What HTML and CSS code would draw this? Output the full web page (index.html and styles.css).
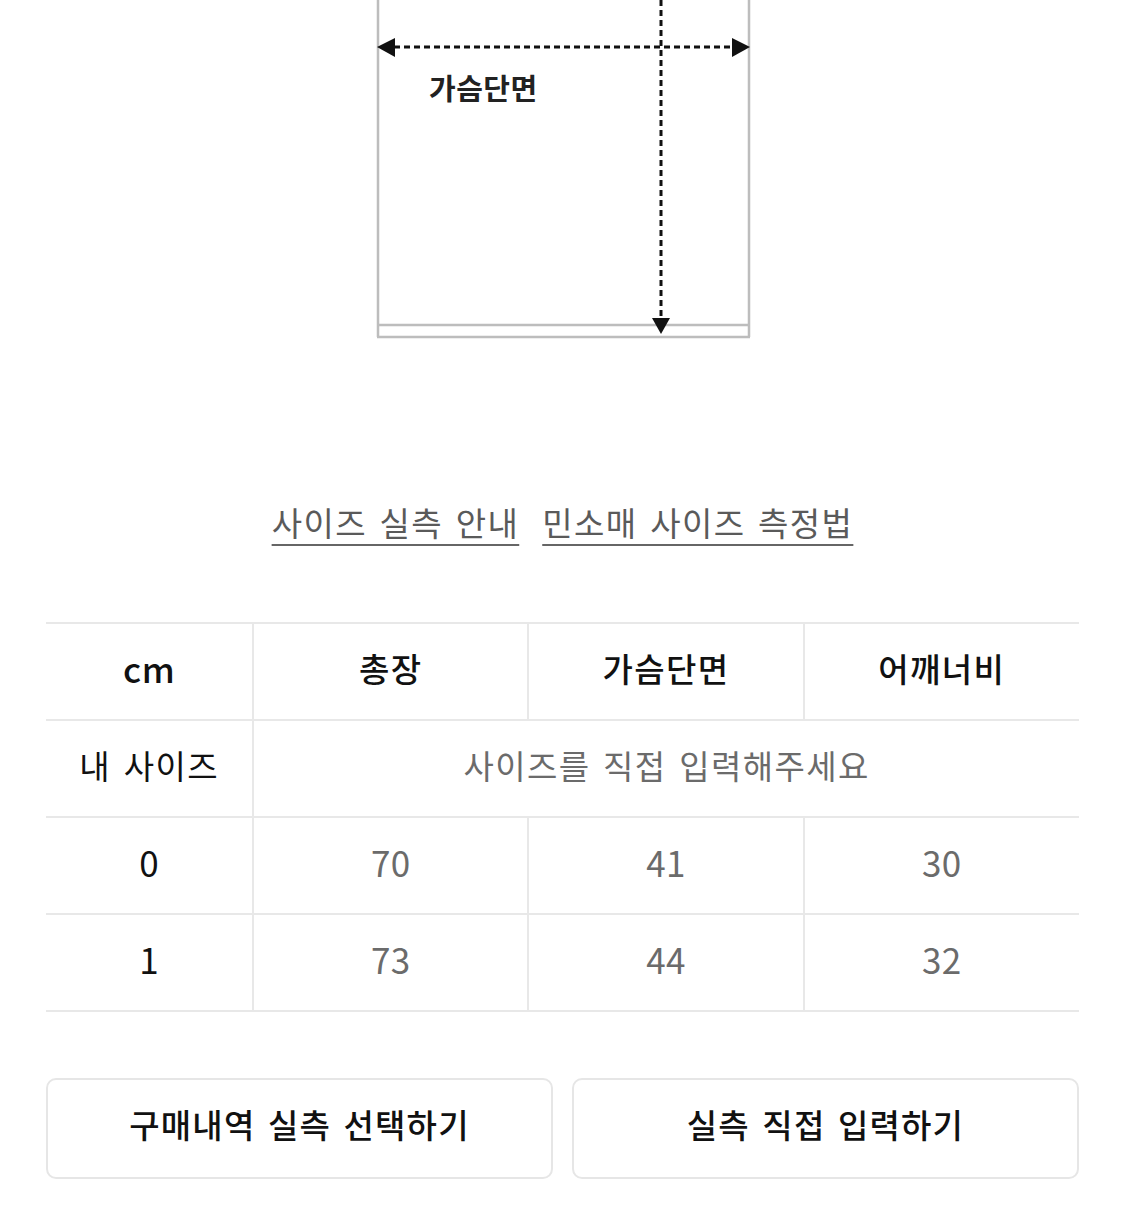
FILE: index.html
```html
<!DOCTYPE html>
<html lang="ko">
<head>
<meta charset="utf-8">
<title>사이즈 정보</title>
<link rel="stylesheet" href="styles.css">
</head>
<body>
<div class="page">
  <div class="diagram">
    <svg class="diagram-svg" width="1125" height="340" viewBox="0 0 1125 340">
      <g fill="none" stroke="#bdbdbd" stroke-width="2.5">
        <line x1="378" y1="0" x2="378" y2="337"/>
        <line x1="749" y1="0" x2="749" y2="337"/>
        <line x1="378" y1="325" x2="749" y2="325"/>
        <line x1="377" y1="337" x2="750" y2="337"/>
      </g>
      <line x1="394" y1="47" x2="734" y2="47" stroke="#111" stroke-width="3" stroke-dasharray="6 4"/>
      <polygon points="377,47 395,38 395,57" fill="#111"/>
      <polygon points="750,47 732,38 732,57" fill="#111"/>
      <line x1="661" y1="0" x2="661" y2="319" stroke="#111" stroke-width="3" stroke-dasharray="6 4"/>
      <polygon points="652,318 670,318 661,334" fill="#111"/>
      <text class="diagram-label" x="429" y="100">가슴단면</text>
    </svg>
  </div>

  <div class="links">
    <a class="guide-link" href="#">사이즈 실측 안내</a>
    <a class="guide-link" href="#">민소매 사이즈 측정법</a>
  </div>

  <table class="size-table">
    <colgroup>
      <col class="c-first">
      <col class="c-data">
      <col class="c-data">
      <col class="c-data">
    </colgroup>
    <tr class="head">
      <td class="label num">cm</td>
      <td>총장</td>
      <td>가슴단면</td>
      <td>어깨너비</td>
    </tr>
    <tr>
      <td class="label">내 사이즈</td>
      <td class="value" colspan="3">사이즈를 직접 입력해주세요</td>
    </tr>
    <tr>
      <td class="label num">0</td>
      <td class="value num">70</td>
      <td class="value num">41</td>
      <td class="value num">30</td>
    </tr>
    <tr>
      <td class="label num">1</td>
      <td class="value num">73</td>
      <td class="value num">44</td>
      <td class="value num">32</td>
    </tr>
  </table>

  <div class="actions">
    <button class="action-btn" type="button">구매내역 실측 선택하기</button>
    <button class="action-btn" type="button">실측 직접 입력하기</button>
  </div>
</div>
</body>
</html>
```

FILE: styles.css
```css
* {
  box-sizing: border-box;
}

html, body {
  margin: 0;
  padding: 0;
  background: #ffffff;
}

body {
  font-family: "Noto Sans CJK KR", "Noto Sans", sans-serif;
  color: #111;
  width: 1125px;
  height: 1211px;
  overflow: hidden;
}

.page {
  display: flex;
  flex-direction: column;
}

.diagram {
  height: 340px;
}

.diagram-svg {
  display: block;
}

.diagram-label {
  font-family: "Noto Sans CJK KR", sans-serif;
  font-weight: 700;
  font-size: 29px;
  fill: #222;
  letter-spacing: 0.5px;
}

.links {
  margin-top: 160px;
  height: 44px;
  display: flex;
  justify-content: center;
  gap: 23px;
  line-height: 44px;
}

.guide-link {
  font-size: 33px;
  letter-spacing: 1.4px;
  color: #5a5a5a;
  text-decoration: underline;
  text-decoration-color: #666;
  text-decoration-thickness: 2px;
  text-underline-offset: 8px;
  word-spacing: 2px;
}

.size-table {
  margin: 78px 0 0 46px;
  width: 1033px;
  border-collapse: collapse;
  table-layout: fixed;
}

.c-first {
  width: 207px;
}

.c-data {
  width: 275px;
}

.size-table td {
  height: 97px;
  padding: 0 0 8px 0;
  text-align: center;
  vertical-align: middle;
  font-size: 33px;
  letter-spacing: 1.4px;
  word-spacing: 2px;
  border-top: 2px solid #e8e8e8;
  border-bottom: 2px solid #e8e8e8;
  border-left: 2px solid #e8e8e8;
}

.size-table td.num {
  font-size: 35px;
  letter-spacing: 0.5px;
}

.size-table td:first-child {
  border-left: none;
}

.size-table .head td {
  font-weight: 500;
  color: #111;
}

.size-table .label {
  color: #111;
}

.size-table .value {
  color: #6b6b6b;
}

.actions {
  margin: 66px 46px 0 46px;
  display: flex;
  gap: 19px;
}

.action-btn {
  flex: 1;
  height: 101px;
  background: #fff;
  border: 2px solid #e6e6e6;
  border-radius: 10px;
  font-family: "Noto Sans CJK KR", sans-serif;
  font-size: 33px;
  font-weight: 500;
  letter-spacing: 1.2px;
  word-spacing: 2px;
  color: #111;
  padding: 0 0 10px 0;
}
```
